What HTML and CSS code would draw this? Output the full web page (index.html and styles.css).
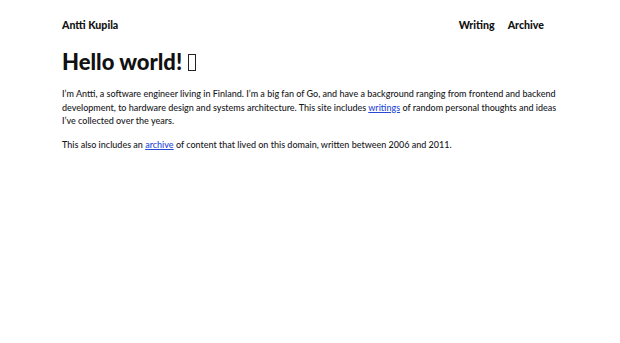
FILE: index.html
```html
<!DOCTYPE html>
<html>
<head>
	<meta charset="UTF-8">
	<title>Antti Kupila</title>
	<link rel="stylesheet" href="styles.css">
</head>
<body>
	<div class="page">
		<header class="top">
			<a class="name" href="#">Antti Kupila</a>
			<nav class="nav">
				<a href="#">Writing</a>
				<a href="#">Archive</a>
			</nav>
		</header>
		<h1 class="title">Hello world! <span class="wave"><span>&#x1F44B;</span></span></h1>
		<p>I’m Antti, a software engineer living in Finland. I’m a big fan of Go, and have a background ranging from frontend and backend development, to hardware design and systems architecture. This site includes <a href="#">writings</a> of random personal thoughts and ideas I’ve collected over the years.</p>
		<p>This also includes an <a href="#">archive</a> of content that lived on this domain, written between 2006 and 2011.</p>
	</div>
</body>
</html>
```

FILE: styles.css
```css
*{
	margin: 0;
	padding: 0;
}
body{
	background: #fff;
	color: #18181c;
	font: 500 9px/13.5px Lato, 'Noto Sans', sans-serif;
}
.page{
	width: 496px;
	margin: 0 auto;
}
.top{
	display: flex;
	justify-content: space-between;
	align-items: center;
	height: 52px;
}
.top a{
	color: #111;
	text-decoration: none;
	font-weight: 900;
	font-size: 10.6px;
}
.nav{
	display: flex;
	gap: 13px;
	padding-right: 14px;
}
.title{
	display: flex;
	align-items: center;
	font-size: 22px;
	line-height: 20px;
	font-weight: 900;
	color: #111;
	margin-bottom: 15px;
}
.wave{
	display: inline-block;
	width: 6px;
	height: 15px;
	margin-left: 6px;
	border: 1.5px solid #222;
	overflow: hidden;
}
.wave span{
	opacity: 0;
	font-size: 1px;
}
p{
	margin-bottom: 10px;
}
p a{
	color: #2747d6;
}
```
